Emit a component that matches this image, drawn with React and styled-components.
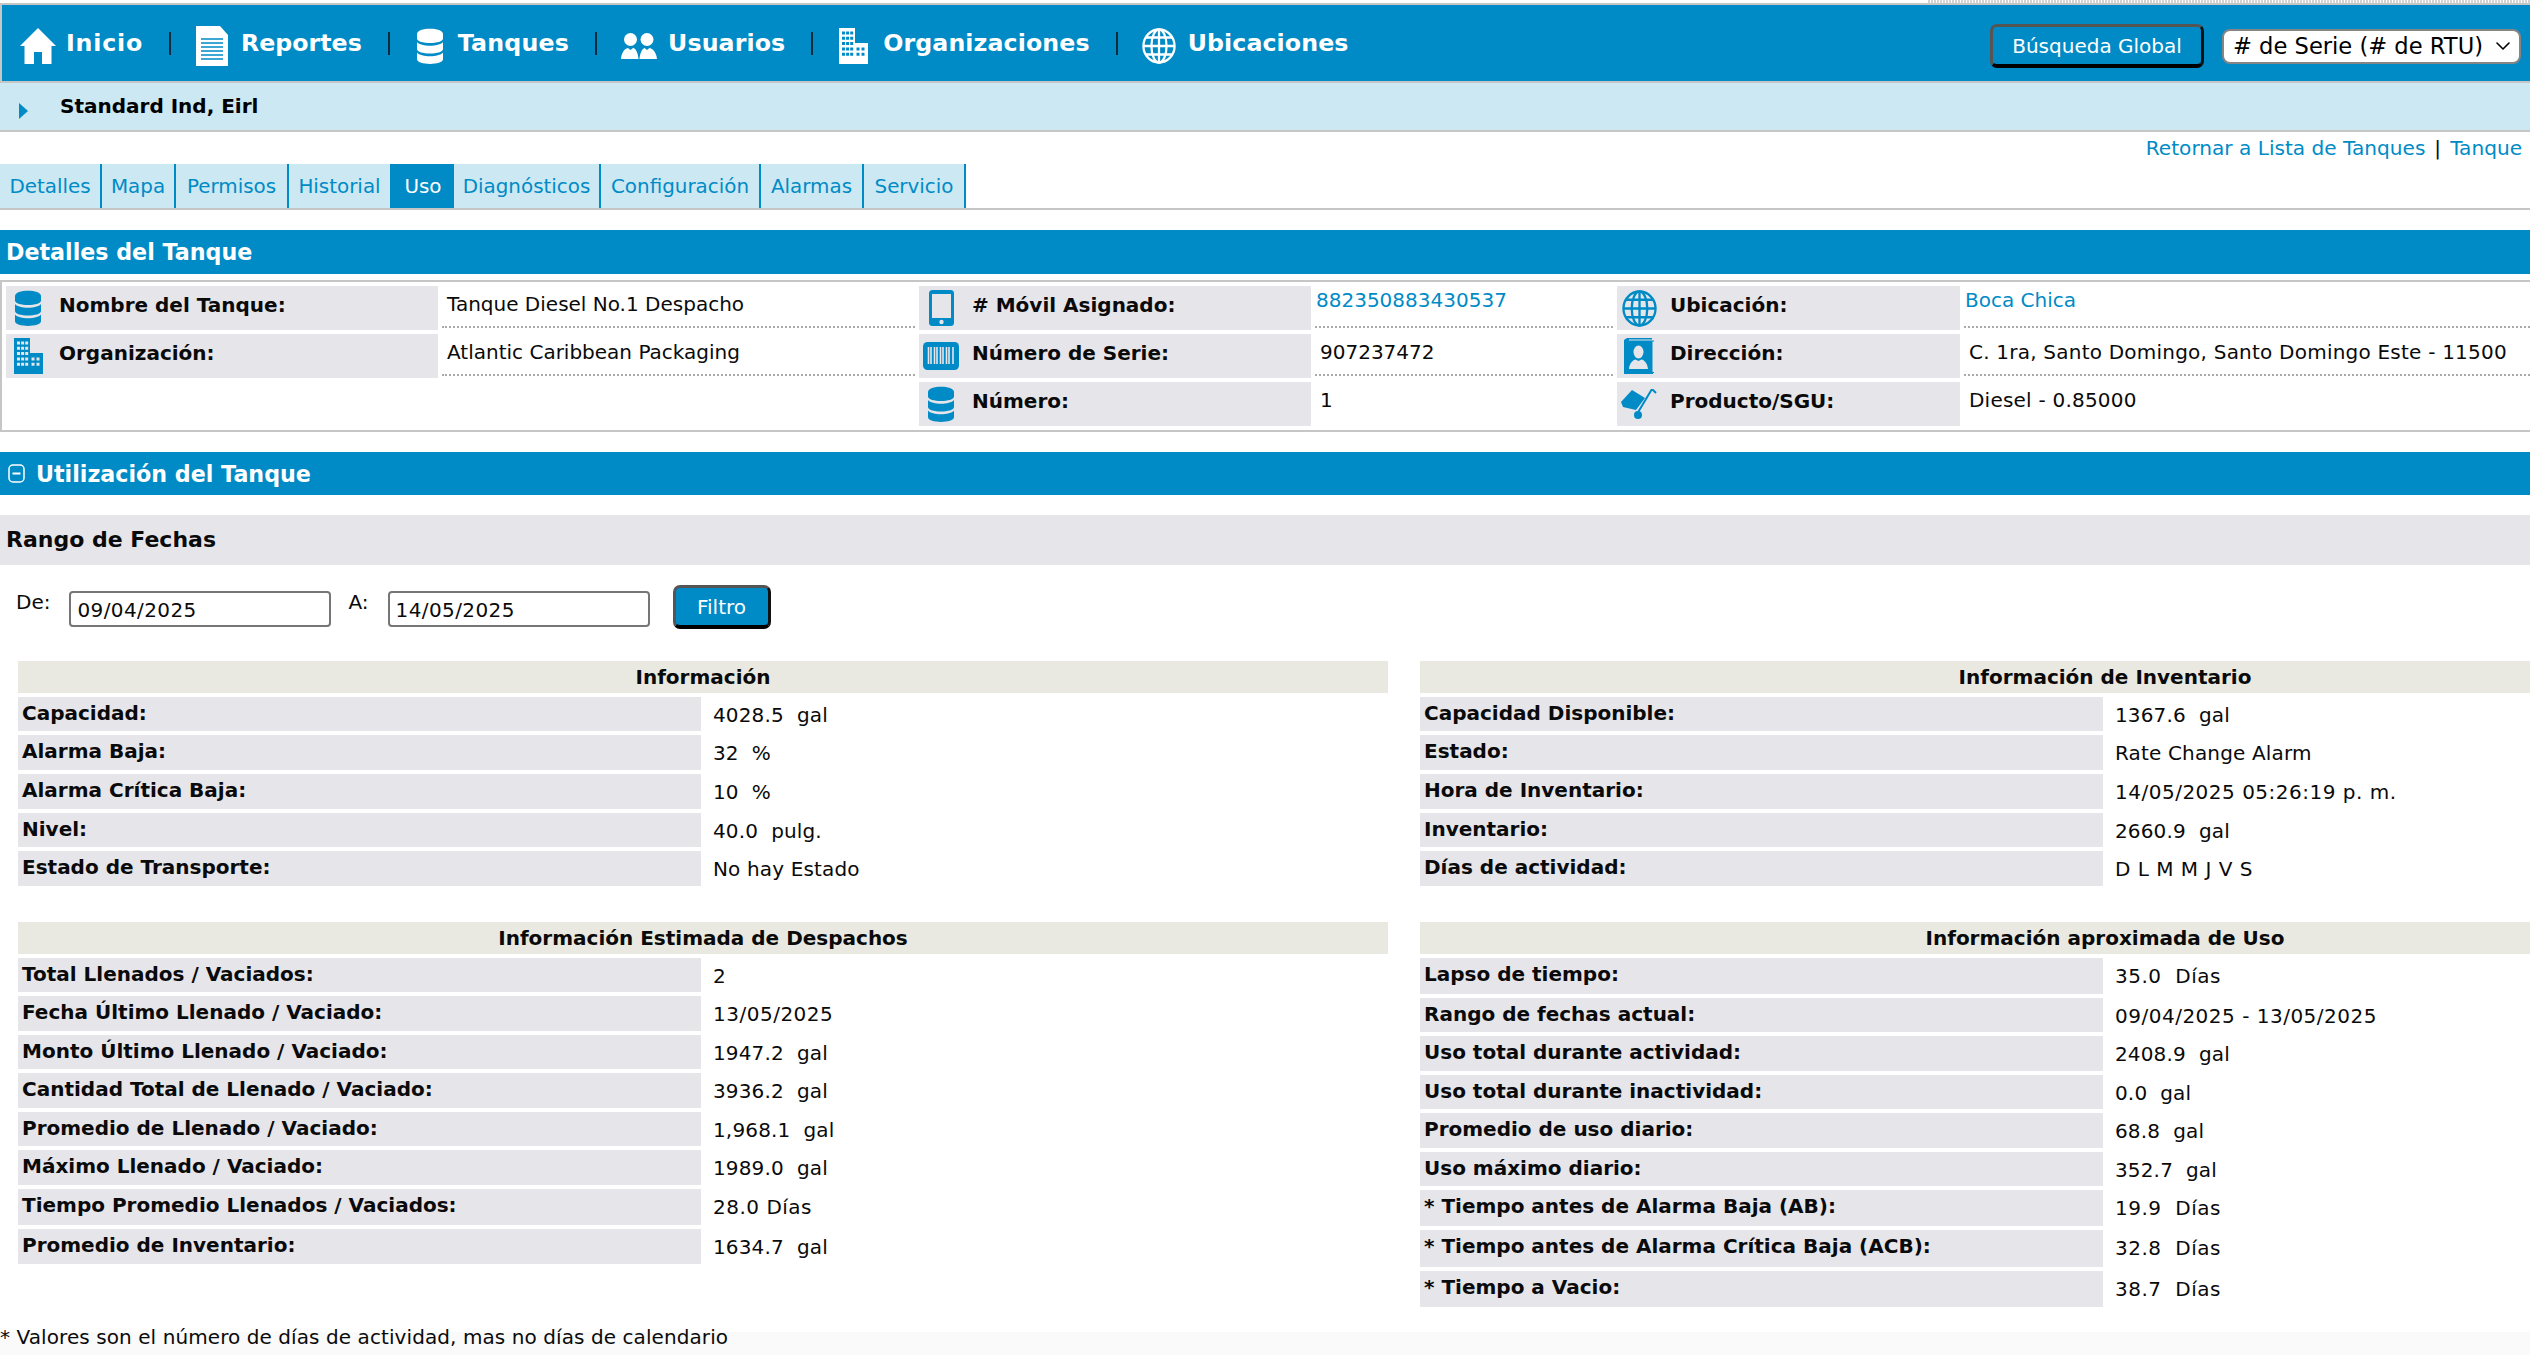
import React from "react";
import styled, { createGlobalStyle } from "styled-components";
import { ChevronDown } from "lucide-react";

const BLUE = "#008bc6";
const LINE = "#c6c6c6";
const LABEL_BG = "#e5e5ea";

const GlobalStyle = createGlobalStyle`
  html, body {
    margin: 0;
    padding: 0;
    background: #fff;
    overflow: hidden;
  }
  * { box-sizing: border-box; }
`;

const Page = styled.div`
  width: 2530px;
  height: 1356px;
  overflow: hidden;
  background: #fff;
  color: #0a0a0a;
  font-family: "DejaVu Sans", Verdana, sans-serif;
  font-size: 20px;
  line-height: 24px;
`;

const TopStrip = styled.div`
  height: 3px;
  display: flex;
  justify-content: flex-end;
`;

const DottedEdge = styled.div`
  width: 602px;
  background: repeating-linear-gradient(90deg, #d2d2d2 0 2px, #fff 2px 3px);
`;

const NavBar = styled.nav`
  height: 80px;
  display: flex;
  align-items: center;
  background: ${BLUE};
  border-top: 2px solid ${LINE};
  border-bottom: 2px solid ${LINE};
  border-left: 2px solid ${LINE};
  padding-left: 18px;
  padding-right: 9px;
`;

const NavItem = styled.a`
  display: flex;
  align-items: center;
  color: #fff;
  font-weight: 700;
  font-size: 23.7px;
  letter-spacing: ${(p) => p.$ls || 0}px;
  margin-left: ${(p) => p.$lead}px;
`;

const NavIcon = styled.span`
  display: flex;
  margin-top: 6px;
  margin-right: ${(p) => p.$gap}px;
  color: #fff;
`;

const NavSep = styled.span`
  width: 2px;
  height: 23px;
  margin-left: 26px;
  background: #0c2c3d;
`;

const NavRight = styled.div`
  margin-left: auto;
  margin-top: 6px;
  display: flex;
  align-items: center;
  gap: 18px;
`;

const RaisedButton = styled.button`
  height: ${(p) => p.$h}px;
  width: ${(p) => p.$w}px;
  padding: 0;
  background: ${BLUE};
  color: #fff;
  font-family: inherit;
  font-size: 20px;
  border-style: solid;
  border-color: #555 #111 #000 #555;
  border-width: 3px 3px 4px 3px;
  border-radius: 7px;
`;

const SelectBox = styled.div`
  width: 299px;
  height: 35px;
  display: flex;
  align-items: center;
  justify-content: space-between;
  background: #fff;
  color: #000;
  border: 2px solid #858585;
  border-radius: 8px;
  padding: 0 4px 0 9px;
  font-size: 22.6px;
  white-space: nowrap;
`;

const SubBar = styled.div`
  height: 49px;
  display: flex;
  align-items: center;
  background: #cbe8f3;
  border-bottom: 2px solid ${LINE};
  padding-left: 19px;
`;

const SubArrow = styled.span`
  width: 0;
  height: 0;
  margin-top: 8px;
  margin-right: 32px;
  border-left: 9px solid ${BLUE};
  border-top: 8px solid transparent;
  border-bottom: 8px solid transparent;
`;

const SubTitle = styled.span`
  font-weight: 700;
  font-size: 20px;
  color: #000;
  margin-top: -1px;
`;

const LinkRow = styled.div`
  height: 32px;
  display: flex;
  justify-content: flex-end;
  align-items: center;
  gap: 9px;
  padding-right: 8px;
  font-size: 20.1px;
  white-space: nowrap;
`;

const BlueLink = styled.a`
  color: ${BLUE};
`;

const TabBar = styled.div`
  height: 46px;
  display: flex;
  border-bottom: 2px solid ${LINE};
`;

const Tab = styled.a`
  width: ${(p) => p.$w}px;
  height: 44px;
  padding-top: 2px;
  display: flex;
  align-items: center;
  justify-content: center;
  white-space: nowrap;
  background: ${(p) => (p.$active ? BLUE : "#cbe8f3")};
  color: ${(p) => (p.$active ? "#fff" : BLUE)};
  border-right: ${(p) => (p.$active ? "none" : `2px solid ${BLUE}`)};
  font-size: 19.9px;
`;

const SectionBar = styled.h2`
  margin: 20px 0 0;
  height: ${(p) => p.$h}px;
  display: flex;
  align-items: center;
  gap: 11px;
  padding-left: ${(p) => p.$left}px;
  background: ${BLUE};
  color: #fff;
  font-size: 22.2px;
  font-weight: 700;
`;

const DetailBox = styled.section`
  margin-top: 6px;
  height: 152px;
  border: 2px solid ${LINE};
  border-right: none;
  padding: 4px 0 4px 4px;
  display: grid;
  grid-template-columns: 432px 473px 392px 298px 343px 1fr;
  grid-auto-rows: 44px;
  gap: 4px;
`;

const DetailLabel = styled.div`
  display: flex;
  background: ${LABEL_BG};
  font-weight: 700;
  font-size: 20px;
  white-space: nowrap;
  padding-top: 7px;
  grid-column: ${(p) => p.$col || "auto"};
`;

const DetailIcon = styled.span`
  width: 44px;
  height: 36px;
  margin-top: -3px;
  margin-right: 9px;
  display: flex;
  align-items: center;
  justify-content: center;
  color: ${BLUE};
`;

const DetailValue = styled.div`
  padding: ${(p) => (p.$link ? "2px 0 0 1px" : "6px 0 0 5px")};
  white-space: nowrap;
  letter-spacing: ${(p) => (p.$wide ? "0.22px" : "0")};
  border-bottom: ${(p) => (p.$dotted ? "2px dotted #aaa" : "none")};
  margin-bottom: 2px;
`;

const CollapseMark = styled.svg`
  flex: none;
`;

const RangeBar = styled.h3`
  margin: 20px 0 0;
  height: 50px;
  display: flex;
  align-items: center;
  padding-left: 6px;
  background: ${LABEL_BG};
  font-size: 22px;
  font-weight: 700;
`;

const FilterRow = styled.form`
  margin: 20px 0 0;
  height: 44px;
  display: flex;
  padding-left: 16px;
`;

const FieldLabel = styled.label`
  padding-top: 5px;
  margin-right: ${(p) => p.$gap}px;
`;

const DateInput = styled.input`
  width: 262px;
  height: 36px;
  margin-top: 6px;
  margin-right: ${(p) => p.$gap}px;
  padding: 1px 0 0 6px;
  border: 2px solid #767676;
  border-radius: 4px;
  font-family: inherit;
  font-size: 20px;
  letter-spacing: 0.4px;
  color: #0a0a0a;
  background: #fff;
`;

const TableGrid = styled.div`
  margin-top: 32px;
  padding-left: 18px;
  display: grid;
  grid-template-columns: 1370px 1370px;
  column-gap: 32px;
  row-gap: 36px;
  align-items: start;
`;

const InfoTable = styled.div`
  display: flex;
  flex-direction: column;
  gap: 4px;
`;

const InfoHead = styled.div`
  height: 32px;
  display: flex;
  align-items: center;
  justify-content: center;
  background: #e9e9e1;
  font-weight: 700;
  font-size: 20px;
`;

const InfoRow = styled.div`
  height: ${(p) => p.$h}px;
  display: grid;
  grid-template-columns: 683px 1fr;
  white-space: pre;
`;

const InfoLabel = styled.div`
  background: ${LABEL_BG};
  font-weight: 700;
  font-size: 20px;
  padding: 4px 0 0 4px;
`;

const InfoValue = styled.div`
  padding: 6px 0 0 12px;
  letter-spacing: ${(p) => (p.$wide ? "0.5px" : "0.15px")};
`;

const Footnote = styled.div`
  margin-top: 18px;
  height: 30px;
  letter-spacing: 0.08px;
  background: linear-gradient(#fff 7px, #fafafa 7px);
`;

// icons ---------------------------------------------------------------
const HomeIcon = () => (
  <svg width="36" height="36" viewBox="0 0 36 36" fill="currentColor">
    <path d="M18 0 36 18 31.5 18V36H22V24H14V36H4.500V18H0Z" />
  </svg>
);

const ReportIcon = () => (
  <svg width="32" height="40" viewBox="0 0 32 40">
    <path fill="currentColor" d="M0 0H24L32 9V40H0Z" />
    <path
      stroke={BLUE}
      strokeWidth="1.400"
      d="M5 13H27M5 17H27M5 21H27M5 25H27M5 29H27M5 33H27"
    />
  </svg>
);

const TankIcon = () => (
  <svg width="26" height="36" viewBox="0 0 26 36" fill="currentColor">
    <path d="M0 6C0-1 26-1 26 6V10.500C26 16.500 0 16.500 0 10.500Z" />
    <path d="M0 14C4 19 22 19 26 14V21C26 27 0 27 0 21Z" />
    <path d="M0 24.500C4 29.500 22 29.500 26 24.500V31C26 37.500 0 37.500 0 31Z" />
  </svg>
);

const UsersIcon = () => (
  <svg width="36" height="26" viewBox="0 0 36 26" fill="currentColor">
    <circle cx="9.500" cy="6.500" r="6.500" />
    <circle cx="26" cy="6.500" r="6.500" />
    <path d="M0 26C0.500 20 3 16 7 15L9.500 17 12 15C15 15.500 17 20 17.500 26Z" />
    <path d="M18.500 26C19 20 21 16 23.500 15L26 17 28.500 15C32.500 16 35.500 20 36 26Z" />
  </svg>
);

const windowHoles = () => {
  let d = "";
  for (let r = 0; r < 5; r++) {
    for (let c = 0; c < 3; c++) {
      d += `M${3 + c * 4.100} ${3.500 + r * 5.300}h3v3h-3z`;
    }
  }
  for (let r = 3; r < 5; r++) {
    for (let c = 0; c < 2; c++) {
      d += `M${17.500 + c * 5} ${3.500 + r * 5.300}h3v3h-3z`;
    }
  }
  return d;
};

const BuildingIcon = () => (
  <svg width="29" height="36" viewBox="0 0 29 36">
    <path
      fill="currentColor"
      fillRule="evenodd"
      d={`M0 0H16V15H29V36H0Z${windowHoles()}`}
    />
  </svg>
);

const GlobeIcon = ({ size = 34 }) => (
  <svg
    width={size}
    height={size + 2}
    viewBox="0 0 36 36"
    fill="none"
    stroke="currentColor"
    strokeWidth="2.400"
    preserveAspectRatio="none"
  >
    <circle cx="18" cy="18" r="16.500" />
    <ellipse cx="18" cy="18" rx="8" ry="16.500" />
    <path d="M18 1.500V34.500M1.500 18H34.500M4 9.500H32M4 26.500H32" />
  </svg>
);

const PhoneIcon = () => (
  <svg width="25" height="36" viewBox="0 0 25 36">
    <rect width="25" height="36" rx="3.500" fill="currentColor" />
    <rect x="3" y="4" width="19" height="24" fill={LABEL_BG} />
    <circle cx="12.500" cy="32" r="2.200" fill={LABEL_BG} />
  </svg>
);

const BarcodeIcon = () => (
  <svg width="36" height="28" viewBox="0 0 36 28">
    <rect width="36" height="28" rx="4.500" fill="currentColor" />
    <path
      stroke={LABEL_BG}
      fill="none"
      d="M5.500 5V22M8 5V22M11.500 5V22M14 5V22M17.500 5V22M20 5V22M23.500 5V22M26 5V22M30 5V22"
      strokeWidth="1.600"
    />
  </svg>
);

const ContactIcon = () => (
  <svg width="31" height="36" viewBox="0 0 31 36">
    <path fill="currentColor" d="M0 2 3 0H28V1.500H5V2.500H30V35H29V36H0Z" />
    <path fill={LABEL_BG} d="M28.500 3.500H30V34H28.500Z" />
    <ellipse cx="14.500" cy="14" rx="5" ry="6.500" fill={LABEL_BG} />
    <path
      fill={LABEL_BG}
      d="M5 31C5.500 25 9 22 11.500 21.500L14.500 23 17.500 21.500C20 22 23.500 25 24 31Z"
    />
  </svg>
);

const DollyIcon = () => (
  <svg width="36" height="30" viewBox="0 0 36 30">
    <path fill="currentColor" d="M0 13 11 1 24 9 15 21 2 18Z" />
    <path stroke="currentColor" strokeWidth="2" fill="none" d="M35 4 31 0 16 25" />
    <circle cx="17" cy="26" r="4" fill="currentColor" />
  </svg>
);

const navItems = [
  { label: "Inicio", icon: <HomeIcon />, lead: 0, gap: 10, ls: 0.8 },
  { label: "Reportes", icon: <ReportIcon />, lead: 25, gap: 13 },
  { label: "Tanques", icon: <TankIcon />, lead: 27, gap: 15, ls: 0.2 },
  { label: "Usuarios", icon: <UsersIcon />, lead: 24, gap: 11, ls: 0.1 },
  { label: "Organizaciones", icon: <BuildingIcon />, lead: 26, gap: 15, ls: 0.1 },
  { label: "Ubicaciones", icon: <GlobeIcon />, lead: 24, gap: 12, ls: 0.1 },
];

const tabs = [
  ["Detalles", 102],
  ["Mapa", 74],
  ["Permisos", 113],
  ["Historial", 103],
  ["Uso", 62],
  ["Diagnósticos", 147],
  ["Configuración", 160],
  ["Alarmas", 103],
  ["Servicio", 102],
];

const tables = [
  {
    title: "Información",
    rows: [
      ["Capacidad:", "4028.5\u00a0 gal", 34],
      ["Alarma Baja:", "32\u00a0 %", 35],
      ["Alarma Crítica Baja:", "10\u00a0 %", 35],
      ["Nivel:", "40.0\u00a0 pulg.", 34],
      ["Estado de Transporte:", "No hay Estado", 35],
    ],
  },
  {
    title: "Información de Inventario",
    rows: [
      ["Capacidad Disponible:", "1367.6\u00a0 gal", 34],
      ["Estado:", "Rate Change Alarm", 35],
      ["Hora de Inventario:", "14/05/2025 05:26:19 p. m.", 35, true],
      ["Inventario:", "2660.9\u00a0 gal", 34],
      ["Días de actividad:", "D L M M J V S", 35, true],
    ],
  },
  {
    title: "Información Estimada de Despachos",
    rows: [
      ["Total Llenados / Vaciados:", "2", 34],
      ["Fecha Último Llenado / Vaciado:", "13/05/2025", 35, true],
      ["Monto Último Llenado / Vaciado:", "1947.2\u00a0 gal", 34],
      ["Cantidad Total de Llenado / Vaciado:", "3936.2\u00a0 gal", 35],
      ["Promedio de Llenado / Vaciado:", "1,968.1\u00a0 gal", 34],
      ["Máximo Llenado / Vaciado:", "1989.0\u00a0 gal", 35],
      ["Tiempo Promedio Llenados / Vaciados:", "28.0 Días", 36, true],
      ["Promedio de Inventario:", "1634.7\u00a0 gal", 35],
    ],
  },
  {
    title: "Información aproximada de Uso",
    rows: [
      ["Lapso de tiempo:", "35.0\u00a0 Días", 36, true],
      ["Rango de fechas actual:", "09/04/2025 - 13/05/2025", 34, true],
      ["Uso total durante actividad:", "2408.9\u00a0 gal", 35],
      ["Uso total durante inactividad:", "0.0\u00a0 gal", 34],
      ["Promedio de uso diario:", "68.8\u00a0 gal", 35],
      ["Uso máximo diario:", "352.7\u00a0 gal", 34],
      ["* Tiempo antes de Alarma Baja (AB):", "19.9\u00a0 Días", 36, true],
      ["* Tiempo antes de Alarma Crítica Baja (ACB):", "32.8\u00a0 Días", 37, true],
      ["* Tiempo a Vacio:", "38.7\u00a0 Días", 36, true],
    ],
  },
];

const App = () => {
  return (
    <Page>
      <GlobalStyle />
      <TopStrip>
        <DottedEdge />
      </TopStrip>
      <NavBar>
        {navItems.map((item, i) => (
          <React.Fragment key={item.label}>
            <NavItem $lead={item.lead} $ls={item.ls}>
              <NavIcon $gap={item.gap}>{item.icon}</NavIcon>
              {item.label}
            </NavItem>
            {i < navItems.length - 1 && <NavSep />}
          </React.Fragment>
        ))}
        <NavRight>
          <RaisedButton $w={214} $h={44} type="button">
            Búsqueda Global
          </RaisedButton>
          <SelectBox>
            # de Serie (# de RTU)
            <ChevronDown size={24} strokeWidth={1.6} />
          </SelectBox>
        </NavRight>
      </NavBar>
      <SubBar>
        <SubArrow />
        <SubTitle>Standard Ind, Eirl</SubTitle>
      </SubBar>
      <LinkRow>
        <BlueLink>Retornar a Lista de Tanques</BlueLink>
        <span>|</span>
        <BlueLink>Tanque</BlueLink>
      </LinkRow>
      <TabBar>
        {tabs.map(([name, w]) => (
          <Tab key={name} $w={w} $active={name === "Uso"}>
            {name}
          </Tab>
        ))}
      </TabBar>

      <SectionBar $h={44} $left={6}>
        Detalles del Tanque
      </SectionBar>
      <DetailBox>
        <DetailLabel>
          <DetailIcon>
            <TankIcon />
          </DetailIcon>
          Nombre del Tanque:
        </DetailLabel>
        <DetailValue $dotted>Tanque Diesel No.1 Despacho</DetailValue>
        <DetailLabel>
          <DetailIcon>
            <PhoneIcon />
          </DetailIcon>
          # Móvil Asignado:
        </DetailLabel>
        <DetailValue $dotted $link>
          <BlueLink>882350883430537</BlueLink>
        </DetailValue>
        <DetailLabel>
          <DetailIcon>
            <GlobeIcon size={35} />
          </DetailIcon>
          Ubicación:
        </DetailLabel>
        <DetailValue $dotted $link>
          <BlueLink>Boca Chica</BlueLink>
        </DetailValue>

        <DetailLabel>
          <DetailIcon>
            <BuildingIcon />
          </DetailIcon>
          Organización:
        </DetailLabel>
        <DetailValue $dotted>Atlantic Caribbean Packaging</DetailValue>
        <DetailLabel>
          <DetailIcon>
            <BarcodeIcon />
          </DetailIcon>
          Número de Serie:
        </DetailLabel>
        <DetailValue $dotted>907237472</DetailValue>
        <DetailLabel>
          <DetailIcon>
            <ContactIcon />
          </DetailIcon>
          Dirección:
        </DetailLabel>
        <DetailValue $dotted $wide>
          C. 1ra, Santo Domingo, Santo Domingo Este - 11500
        </DetailValue>

        <DetailLabel $col="3">
          <DetailIcon>
            <TankIcon />
          </DetailIcon>
          Número:
        </DetailLabel>
        <DetailValue>1</DetailValue>
        <DetailLabel>
          <DetailIcon>
            <DollyIcon />
          </DetailIcon>
          Producto/SGU:
        </DetailLabel>
        <DetailValue $wide>Diesel - 0.85000</DetailValue>
      </DetailBox>

      <SectionBar $h={43} $left={8}>
        <CollapseMark width="17" height="19" viewBox="0 0 17 19" fill="none" stroke="#fff">
          <rect x="1" y="1" width="15" height="17" rx="4" strokeWidth="1.500" />
          <path d="M4.500 9.500H12.500" strokeWidth="2" />
        </CollapseMark>
        Utilización del Tanque
      </SectionBar>
      <RangeBar>Rango de Fechas</RangeBar>
      <FilterRow>
        <FieldLabel $gap={19}>De:</FieldLabel>
        <DateInput defaultValue="09/04/2025" $gap={17} />
        <FieldLabel $gap={19}>A:</FieldLabel>
        <DateInput defaultValue="14/05/2025" $gap={23} />
        <RaisedButton $w={98} $h={44} type="button">
          Filtro
        </RaisedButton>
      </FilterRow>

      <TableGrid>
        {tables.map((t) => (
          <InfoTable key={t.title}>
            <InfoHead>{t.title}</InfoHead>
            {t.rows.map(([label, value, h, wide]) => (
              <InfoRow key={label} $h={h}>
                <InfoLabel>{label}</InfoLabel>
                <InfoValue $wide={wide}>{value}</InfoValue>
              </InfoRow>
            ))}
          </InfoTable>
        ))}
      </TableGrid>
      <Footnote>* Valores son el número de días de actividad, mas no días de calendario</Footnote>
    </Page>
  );
};

export default App;
